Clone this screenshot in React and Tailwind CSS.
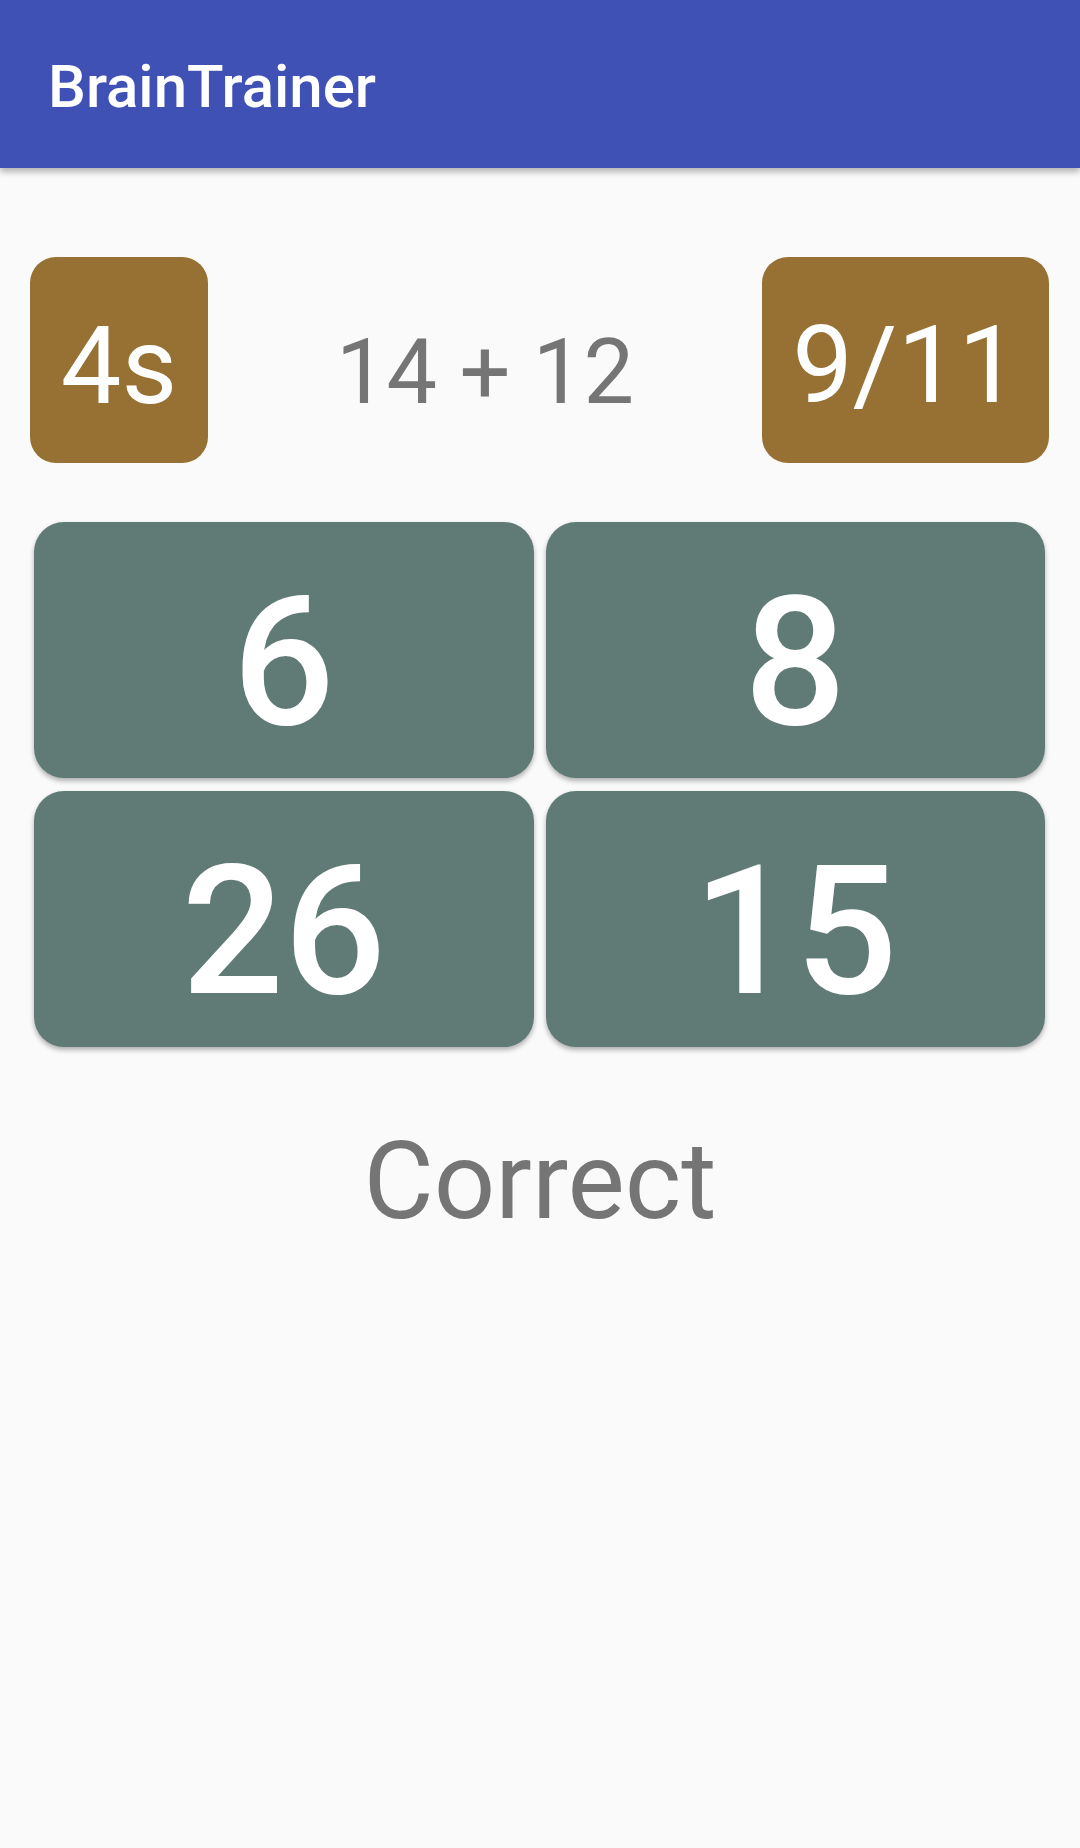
const answers = [6, 8, 26, 15];

export default function App() {
  return (
    <div className="min-h-[1848px] w-[1080px] bg-[#fafafa]" style={{ fontFamily: "Roboto, 'Liberation Sans', sans-serif" }}>
      <header className="h-[168px] bg-[#3f51b5] flex items-center px-12 pt-[5px] shadow-[0_4px_6px_rgba(0,0,0,0.28)] relative">
        <h1 className="text-white text-[60px] leading-none font-medium">BrainTrainer</h1>
      </header>

      <main>
        <div className="mt-[89px] flex items-center pl-[30px] pr-[31px]">
          <div className="w-[178px] h-[206px] rounded-[26px] bg-[#977134] flex items-center justify-center pt-[12px]">
            <span className="text-white text-[108px] leading-none">4s</span>
          </div>
          <div className="flex-1 flex justify-center pt-[25px]">
            <span className="text-[#757575] text-[90px] leading-none">14 + 12</span>
          </div>
          <div className="w-[287px] h-[206px] rounded-[26px] bg-[#977134] flex items-center justify-center pt-[9px]">
            <span className="text-white text-[108px] leading-none">9/11</span>
          </div>
        </div>

        <div className="mt-[59px] grid grid-cols-2 gap-x-[12px] gap-y-[13px] pl-[34px] pr-[35px]">
          {answers.map((n) => (
            <button
              key={n}
              className="h-[256px] rounded-[30px] bg-[#607b75] flex items-center justify-center pt-[26px] shadow-[0_3px_5px_rgba(0,0,0,0.3)]"
            >
              <span className="text-white text-[180px] leading-none font-medium">{n}</span>
            </button>
          ))}
        </div>

        <p className="mt-[80px] text-center text-[#757575] text-[108px] leading-none">Correct</p>
      </main>
    </div>
  );
}
